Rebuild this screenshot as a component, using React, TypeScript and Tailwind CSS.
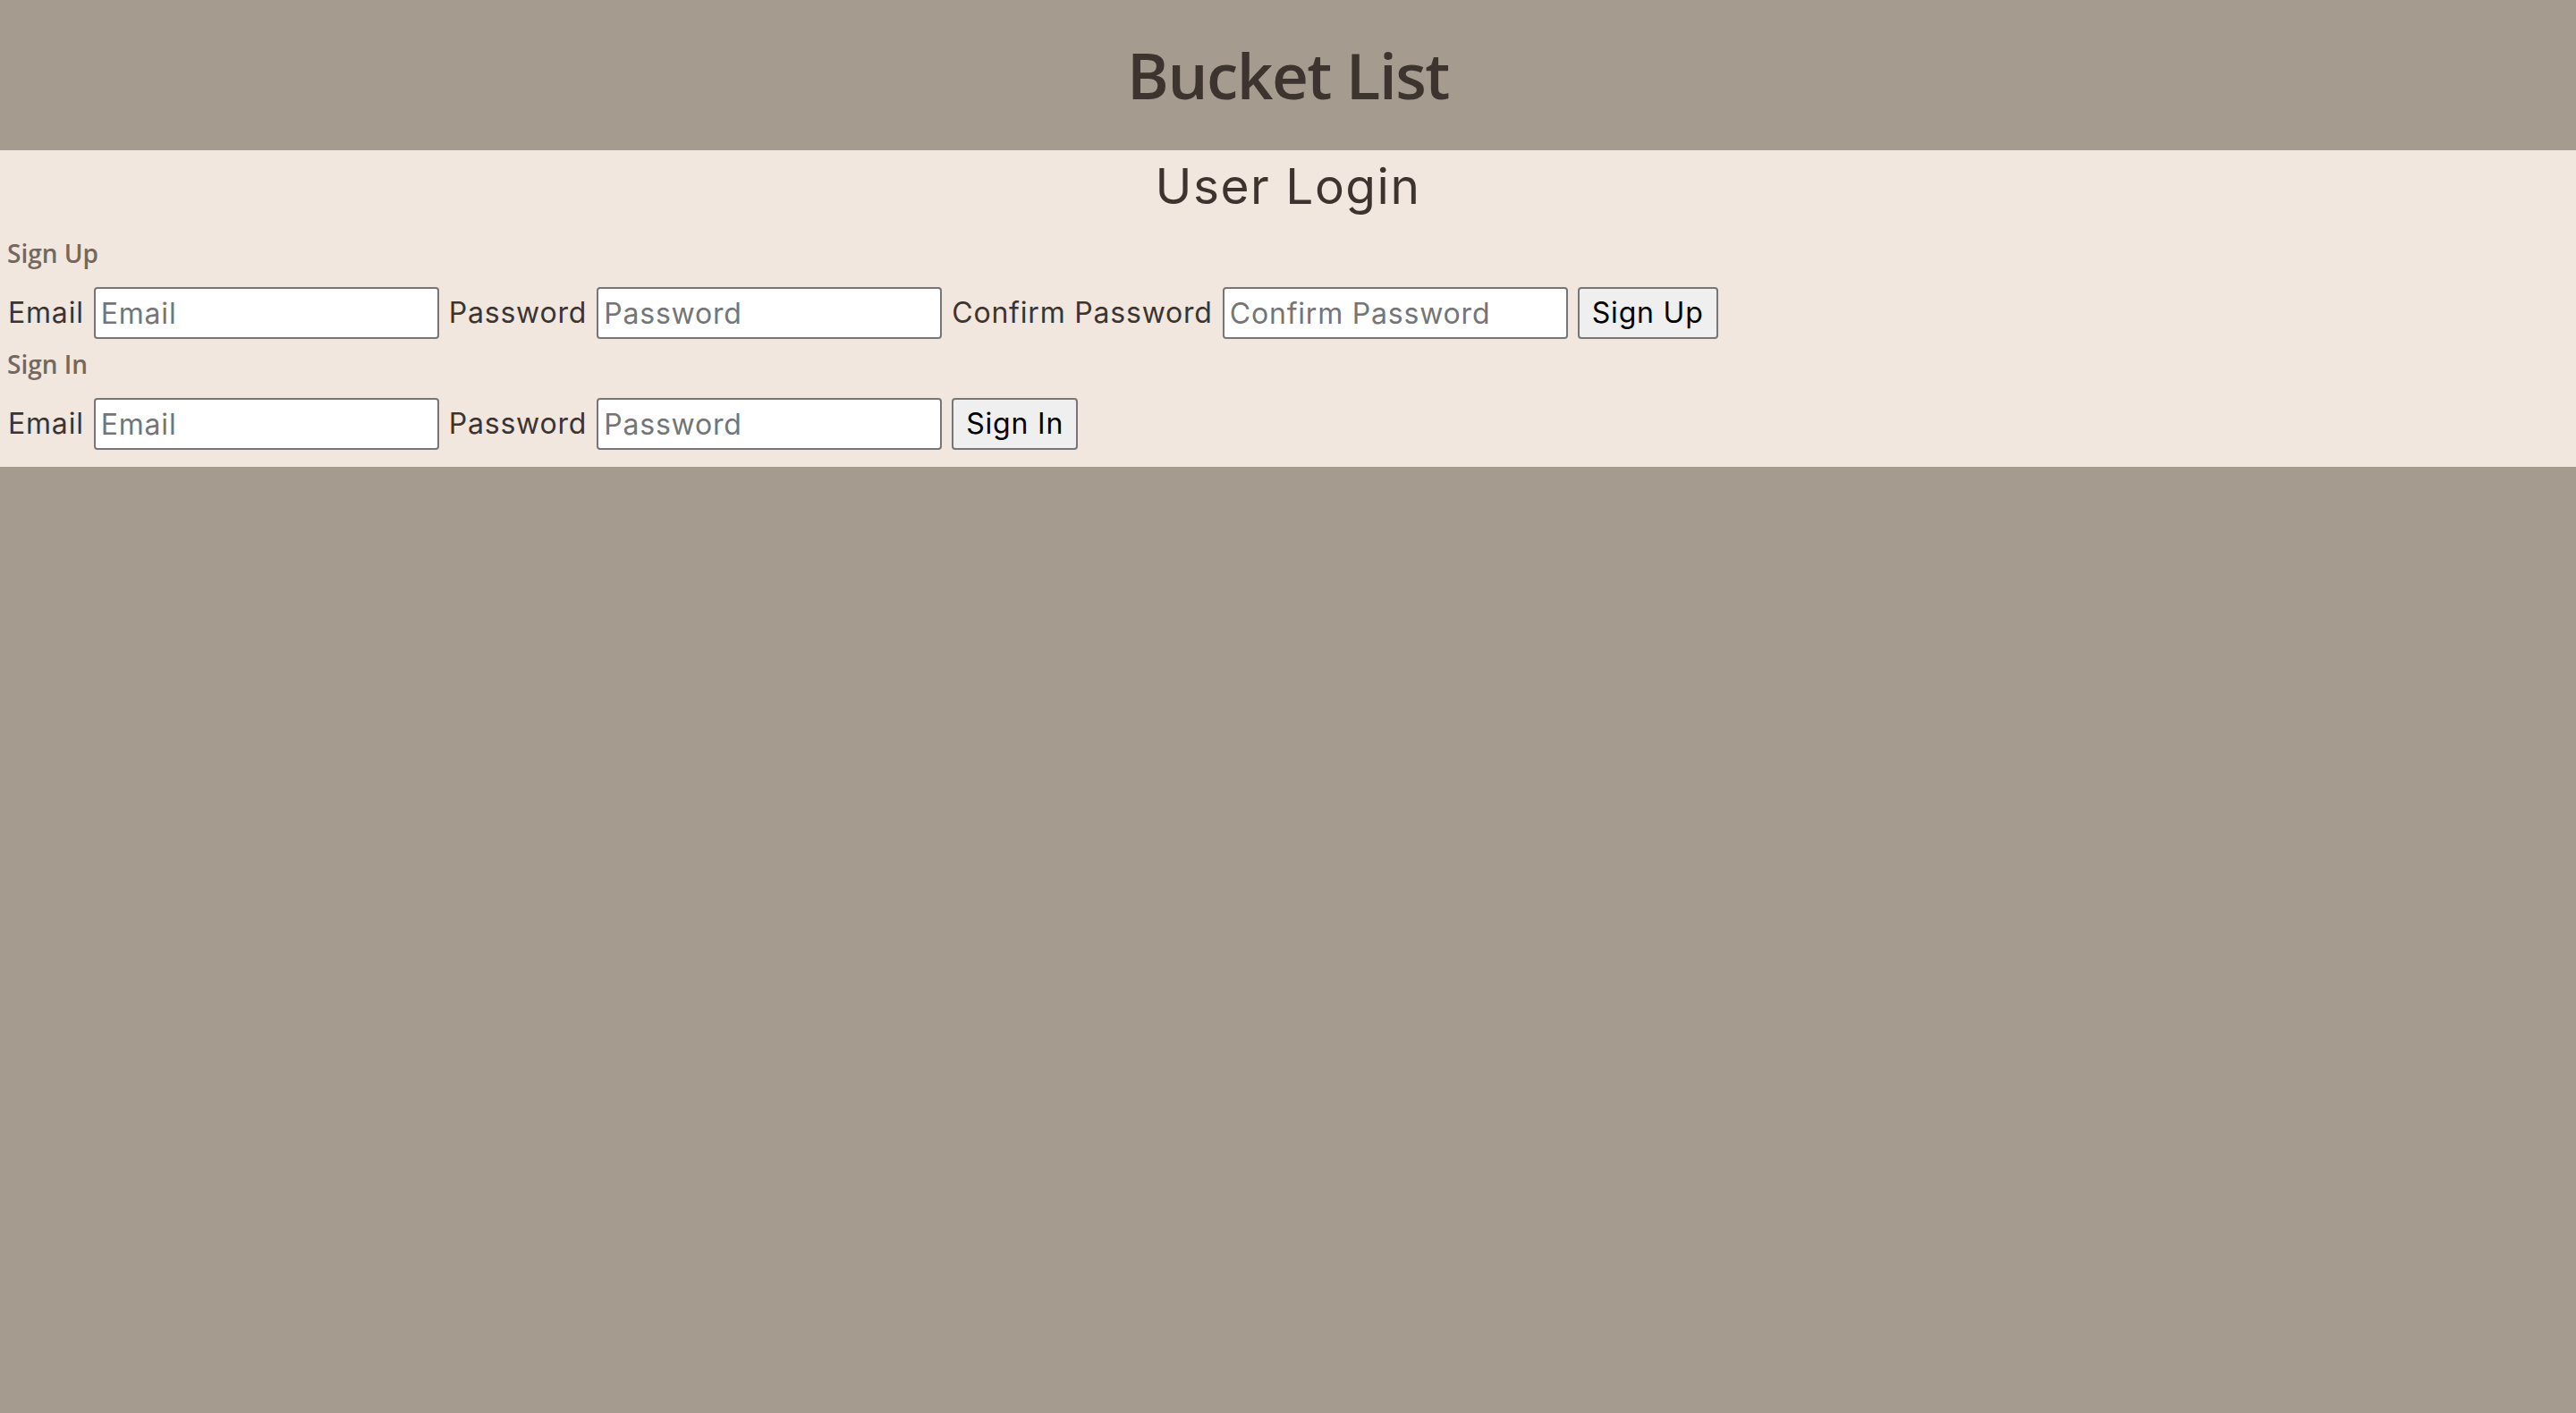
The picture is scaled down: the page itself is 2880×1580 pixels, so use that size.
import React from "react";

const labelFont = { fontFamily: "Inter, 'Open Sans', sans-serif" };

type FieldProps = {
  label: string;
  placeholder: string;
  type?: string;
};

const Field: React.FC<FieldProps> = ({ label, placeholder, type = "text" }) => {
  return (
    <>
      <label className="text-[32px] tracking-[0.8px] text-[#3e342f] leading-none">{label}</label>
      <input
        type={type}
        placeholder={placeholder}
        className="h-[58px] w-[386px] rounded-[4px] border-2 border-[#767676] bg-white px-[6px] text-[32px] tracking-[0.8px] text-black outline-none placeholder:text-[#757575]"
      />
    </>
  );
};

const SubmitButton: React.FC<{ text: string }> = ({ text }) => (
  <button
    type="button"
    className="h-[58px] rounded-[4px] border-2 border-[#767676] bg-[#efefef] px-[14px] text-[32px] tracking-[0.8px] text-black"
  >
    {text}
  </button>
);

export default function App() {
  return (
    <div className="min-h-[1580px] w-full bg-[#a69b8f]">
      {/* Header */}
      <header className="flex h-[168px] items-center justify-center">
        <h1
          className="text-[71px] font-semibold leading-[98px] tracking-[-1.5px] text-[#3e342f]"
          style={{ fontFamily: "'Open Sans', sans-serif" }}
        >
          Bucket List
        </h1>
      </header>

      {/* Login panel */}
      <section className="bg-[#f1e7de] px-2 pt-[10px] pb-[19px]" style={labelFont}>
        <h2 className="text-center text-[55px] leading-[60px] tracking-[1.5px] text-[#3e342f]">
          User Login
        </h2>

        <h3
          className="mt-[26px] text-[28px] font-semibold leading-[38px] text-[#75675d]"
          style={{ fontFamily: "'Open Sans', sans-serif" }}
        >
          Sign Up
        </h3>
        <form className="mt-[19px] flex items-center gap-[11px] pl-[1px]" onSubmit={(e) => e.preventDefault()}>
          <Field label="Email" placeholder="Email" type="email" />
          <Field label="Password" placeholder="Password" type="password" />
          <Field label="Confirm Password" placeholder="Confirm Password" type="password" />
          <SubmitButton text="Sign Up" />
        </form>

        <h3
          className="mt-[9px] text-[28px] font-semibold leading-[38px] text-[#75675d]"
          style={{ fontFamily: "'Open Sans', sans-serif" }}
        >
          Sign In
        </h3>
        <form className="mt-[19px] flex items-center gap-[11px] pl-[1px]" onSubmit={(e) => e.preventDefault()}>
          <Field label="Email" placeholder="Email" type="email" />
          <Field label="Password" placeholder="Password" type="password" />
          <SubmitButton text="Sign In" />
        </form>
      </section>
    </div>
  );
}
